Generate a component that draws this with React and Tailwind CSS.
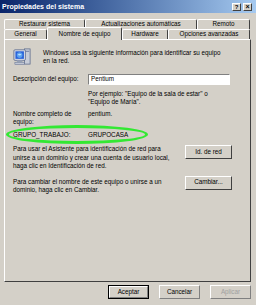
import React from 'react'

const font = { fontFamily: '"Liberation Sans", Arial, sans-serif' }

const Tab = ({ label, w, active }) => (
    <div
        className={
            'flex items-center justify-center border-t border-l border-white border-r border-r-[#404040] rounded-t-[2px] bg-[#d4d0c8] whitespace-nowrap ' +
            (active ? 'h-[13px] -mt-[2px] -mb-[1px] relative z-10' : 'h-[10px]')
        }
        style={{ width: w }}
    >
        <span className="text-[6.3px] leading-none text-black">{label}</span>
    </div>
)

const Button = ({ label, def, disabled }) => (
    <div className={'w-[41px] h-[14px] flex bg-[#d4d0c8] ' + (def ? 'border border-black' : '')}>
        <div className="w-full h-full flex items-center justify-center border-t border-l border-white border-r border-b border-r-[#808080] border-b-[#808080]">
            <span className={'text-[6.3px] leading-none ' + (disabled ? 'text-[#a0a0a0]' : 'text-black')}>{label}</span>
        </div>
    </div>
)

const PcIcon = () => (
    <svg width="19" height="19" viewBox="0 0 20 20">
        <rect x="12" y="2" width="6" height="16" fill="#c8cdd8" stroke="#5a6a8a" strokeWidth="0.8" />
        <rect x="13" y="4" width="4" height="1" fill="#6a7aa0" />
        <rect x="1" y="3" width="12" height="11" rx="1" fill="#e4e8f0" stroke="#4a5a80" strokeWidth="0.8" />
        <rect x="2.5" y="4.5" width="9" height="8" fill="#2a62d8" />
        <circle cx="7" cy="8.5" r="3" fill="#5aa0f0" />
        <path d="M5 8 Q7 6 9 8 Q7 10 5 8Z" fill="#b8e0ff" />
        <rect x="4" y="14" width="6" height="2" fill="#9aa4b8" />
        <rect x="2" y="16" width="10" height="2.5" fill="#c0c6d4" stroke="#5a6a8a" strokeWidth="0.5" />
    </svg>
)

const raised = 'border-t border-l border-white border-r border-b border-r-[#404040] border-b-[#404040]'

const App = () => {
    return (
        <div className="w-[256px] h-[305px] bg-[#d4d0c8] flex flex-col overflow-hidden" style={font}>
            <div className="h-[13px] shrink-0 bg-gradient-to-r from-[#0a246a] to-[#a6caf0] flex items-center justify-between pl-[2px] pr-[4px]">
                <span className="text-white font-bold text-[7px] leading-none whitespace-nowrap">Propiedades del sistema</span>
                <div className="flex gap-[2px]">
                    <div className={'w-[9px] h-[8px] bg-[#d4d0c8] flex items-center justify-center ' + raised}>
                        <span className="text-[6px] font-bold leading-none text-black">?</span>
                    </div>
                    <div className={'w-[9px] h-[8px] bg-[#d4d0c8] flex items-center justify-center ' + raised}>
                        <span className="text-[7px] font-bold leading-none text-black">×</span>
                    </div>
                </div>
            </div>

            <div className="mt-[6px] px-[4px] flex flex-col">
                <div className="flex">
                    <Tab label="Restaurar sistema" w={81} />
                    <Tab label="Actualizaciones automáticas" w={112} />
                    <Tab label="Remoto" w={53} />
                </div>
                <div className="flex">
                    <Tab label="General" w={43} />
                    <Tab label="Nombre de equipo" w={75} active />
                    <Tab label="Hardware" w={46} />
                    <Tab label="Opciones avanzadas" w={82} />
                </div>
            </div>

            <div className={'mx-[4px] w-[247px] h-[243px] shrink-0 relative flex flex-col pl-[8px] text-[6.3px] leading-[8.5px] text-black whitespace-nowrap ' + raised}>
                <div className="flex items-start mt-[7px] h-[19px]">
                    <PcIcon />
                    <div className="ml-[11px] mt-[2px] leading-[8px]">
                        <div>Windows usa la siguiente información para identificar su equipo</div>
                        <div>en la red.</div>
                    </div>
                </div>

                <div className="flex items-center mt-[8px]">
                    <div className="w-[75px]">Descripción del equipo:</div>
                    <div className="w-[142px] h-[11px] bg-white border-t border-l border-[#808080] border-r border-b border-r-white border-b-white flex items-center pl-[2px]">
                        Pentium
                    </div>
                </div>

                <div className="ml-[75px] mt-[5px] leading-[8px]">
                    <div>Por ejemplo: "Equipo de la sala de estar" o</div>
                    <div>"Equipo de María".</div>
                </div>

                <div className="flex mt-[4px] leading-[8px]">
                    <div className="w-[75px]">
                        <div>Nombre completo de</div>
                        <div>equipo:</div>
                    </div>
                    <div>pentium.</div>
                </div>

                <div className="flex mt-[5px] leading-[8px]">
                    <div className="w-[75px]">GRUPO_TRABAJO:</div>
                    <div>GRUPOCASA</div>
                </div>

                <div className="flex justify-between items-start mt-[6px] pr-[18px]">
                    <div>
                        <div>Para usar el Asistente para identificación de red para</div>
                        <div>unirse a un dominio y crear una cuenta de usuario local,</div>
                        <div>haga clic en Identificación de red.</div>
                    </div>
                    <div className={'w-[47px] h-[14px] flex items-center justify-center ' + raised}>
                        Id. de red
                    </div>
                </div>

                <div className="flex justify-between items-start mt-[5px] pr-[18px]">
                    <div className="mt-[2px]">
                        <div>Para cambiar el nombre de este equipo o unirse a un</div>
                        <div>dominio, haga clic en Cambiar.</div>
                    </div>
                    <div className={'w-[47px] h-[14px] flex items-center justify-center ' + raised}>
                        Cambiar...
                    </div>
                </div>

                <div className="absolute left-[1px] top-[85px] w-[142px] h-[19px] rounded-[50%] border-[3px] border-[#33e833]" />
            </div>

            <div className="flex justify-end gap-[10px] pr-[5px] mt-[3px]">
                <Button label="Aceptar" def />
                <Button label="Cancelar" />
                <Button label="Aplicar" disabled />
            </div>
        </div>
    )
}

export default App
